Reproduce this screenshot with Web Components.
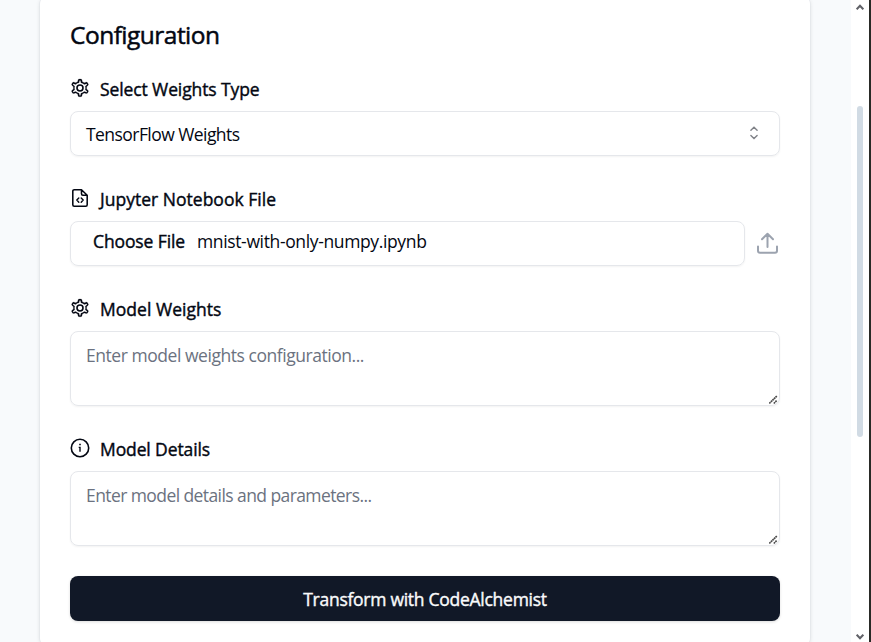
<!DOCTYPE html>
<html lang="en">
<head>
<meta charset="utf-8">
<title>Configuration</title>
<style>
html,body{margin:0;height:100%;overflow:hidden}
body{font-family:"Open Sans","Noto Sans",sans-serif;font-size:17.5px;line-height:25px;color:#030712;background:#f8fafc}
</style>
</head>
<body>
<app-shell>
  <config-card>
    <fit-text slot="title" width="149.5">Configuration</fit-text>
    <form-field>
      <ui-icon slot="icon" name="gear"></ui-icon><fit-text slot="label" width="159.5">Select Weights Type</fit-text>
      <select-box><fit-text width="153.5">TensorFlow Weights</fit-text></select-box>
    </form-field>
    <form-field>
      <ui-icon slot="icon" name="code"></ui-icon><fit-text slot="label" width="176">Jupyter Notebook File</fit-text>
      <file-box><fit-text slot="button" width="92">Choose File</fit-text><fit-text width="229.5">mnist-with-only-numpy.ipynb</fit-text></file-box>
    </form-field>
    <form-field>
      <ui-icon slot="icon" name="gear"></ui-icon><fit-text slot="label" width="121.5">Model Weights</fit-text>
      <text-box><fit-text width="278">Enter model weights configuration...</fit-text></text-box>
    </form-field>
    <form-field>
      <ui-icon slot="icon" name="info"></ui-icon><fit-text slot="label" width="110">Model Details</fit-text>
      <text-box><fit-text width="285.5">Enter model details and parameters...</fit-text></text-box>
    </form-field>
    <action-button><fit-text width="243.5">Transform with CodeAlchemist</fit-text></action-button>
  </config-card>
  <scroll-rail slot="rail"></scroll-rail>
</app-shell>
<script>
const define = (name, html, init) => customElements.define(name, class extends HTMLElement {
  constructor() {
    super();
    this.attachShadow({ mode: 'open' }).innerHTML = html;
  }
  connectedCallback() { if (init) init(this, this.shadowRoot); }
});

define('app-shell', `<style>
:host{display:flex;height:642px;width:871px;overflow:hidden}
main{flex:1;display:flex;justify-content:center;align-items:flex-start;box-sizing:border-box;padding:0 1px 0 0}
</style><main><slot></slot></main><slot name="rail"></slot>`);

define('config-card', `<style>
:host{display:flex;flex-direction:column;box-sizing:border-box;width:770px;height:654px;margin-top:-6px;padding:23px 30px 30px;background:#fff;border-radius:10px;box-shadow:0 0 0 .5px #e2e5ea,0 1px 4px rgba(0,0,0,.13)}
h2{margin:0 0 25px;font-size:24.5px;line-height:35px;font-weight:400;-webkit-text-stroke:.5px}
section{display:flex;flex-direction:column;gap:31px}
</style><h2><slot name="title"></slot></h2><section><slot></slot></section>`);

define('form-field', `<style>
:host{display:flex;flex-direction:column;gap:10px}
label{display:flex;align-items:center;gap:10px;height:24px}
::slotted(ui-icon){margin-top:-2px}
::slotted(fit-text){margin-top:1px;-webkit-text-stroke:.4px}
</style><label><slot name="icon"></slot><slot name="label"></slot></label><slot></slot>`);

define('select-box', `<style>
:host{display:flex;align-items:center;justify-content:space-between;box-sizing:border-box;height:45px;padding:0 15px 1px;border:1px solid #e5e7eb;border-radius:8px;box-shadow:0 1px 2px rgba(0,0,0,.05)}
::slotted(fit-text){margin-top:2px}
ui-icon{opacity:.5}
</style><slot></slot><ui-icon name="sort"></ui-icon>`);

define('file-box', `<style>
:host{display:flex;align-items:center;height:45px;gap:11px}
div{flex:1;display:flex;align-items:center;gap:12px;box-sizing:border-box;height:45px;padding:0 22px 5px;border:1px solid #e5e7eb;border-radius:8px;box-shadow:0 1px 2px rgba(0,0,0,.05)}
b{font-weight:400;-webkit-text-stroke:.4px}
ui-icon{color:#9ca3af;width:23px;height:25px;margin-right:1px}
</style><div><b><slot name="button"></slot></b><slot></slot></div><ui-icon name="upload"></ui-icon>`);

define('text-box', `<style>
:host{display:flex;justify-content:space-between;box-sizing:border-box;height:75px;padding:11px 0 0 15px;border:1px solid #e5e7eb;border-radius:8px;color:#6b7280;box-shadow:0 1px 2px rgba(0,0,0,.05)}
svg{align-self:flex-end;display:block}
</style><slot></slot><svg width="10" height="11" viewBox="0 0 10 11" fill="none" stroke="#4b4b4b" stroke-width="1.7" stroke-dasharray="1.8 .4"><path d="M.3 9.5 7.8 2M4.8 9.5l3-3"/></svg>`);

define('action-button', `<style>
:host{display:flex;align-items:center;justify-content:center;box-sizing:border-box;height:45px;padding-top:2px;margin-top:-1px;background:#111827;color:#f9fafb;border-radius:8px;-webkit-text-stroke:.4px;box-shadow:0 1px 3px rgba(0,0,0,.14)}
</style><slot></slot>`);

define('scroll-rail', `<style>
:host{display:flex;flex-direction:column;align-items:center;box-sizing:border-box;width:20px;height:642px;background:#fff;border-right:2px solid #292a26;padding:4px 0 2px}
i{display:block;width:6px;height:331px;margin:95px 0 auto;border-radius:3px;background:#d1dbe4}
svg{display:block}
</style><svg width="8" height="7" viewBox="0 0 8 7" fill="none" stroke="#606167" stroke-width="2"><path d="m.7 5.3 3.3-3.6 3.3 3.6"/></svg><i></i><svg width="8" height="7" viewBox="0 0 8 7" fill="none" stroke="#606167" stroke-width="2"><path d="M.7 1.7 4 5.3l3.3-3.6"/></svg>`);

/* Text whose tracking is set so that it spans a given advance width. */
define('fit-text', `<style>:host{display:inline-block;white-space:nowrap}</style><slot></slot>`, el => {
  const n = el.textContent.length;
  el.style.letterSpacing = '0px';
  const w = el.getBoundingClientRect().width;
  if (n && w) el.style.letterSpacing = ((+el.getAttribute('width') - w) / n).toFixed(3) + 'px';
});

const gear = '<path fill="currentColor" stroke="currentColor" stroke-width=".12" fill-rule="evenodd" d="M7.07.65a.83.83 0 0 0-.82.66l-.24 1.16c-.42.16-.81.39-1.17.66l-1.12-.37a.83.83 0 0 0-.99.38l-.43.75a.83.83 0 0 0 .17 1.04l.88.79a5 5 0 0 0 0 1.56l-.88.79a.83.83 0 0 0-.17 1.04l.43.75c.2.34.61.5.99.38l1.12-.37c.36.27.75.5 1.17.66l.24 1.16c.08.38.42.66.82.66h.86c.4 0 .74-.28.82-.66l.24-1.16c.42-.16.81-.39 1.17-.66l1.12.37c.38.12.79-.04.99-.38l.43-.75a.83.83 0 0 0-.17-1.04l-.88-.79a5 5 0 0 0 0-1.56l.88-.79a.83.83 0 0 0 .17-1.04l-.43-.75a.83.83 0 0 0-.99-.38l-1.12.37a5 5 0 0 0-1.17-.66l-.24-1.16a.83.83 0 0 0-.82-.66Zm-.17 2.53.28-1.57h.64l.28 1.57c.87.19 1.49.54 2.08 1.13l1.54-.52.31.55-1.22 1.07c.27.86.27 1.52 0 2.38l1.22 1.07-.31.55-1.54-.52A4.1 4.1 0 0 1 8.1 10.02l-.28 1.57h-.64l-.28-1.57A4.1 4.1 0 0 1 4.82 8.89l-1.54.52-.31-.55 1.22-1.07a3.8 3.8 0 0 1 0-2.38L2.97 4.34l.31-.55 1.54.52A4.1 4.1 0 0 1 6.9 3.18Z" transform="translate(0 .9)"/><circle cx="7.5" cy="7.5" r="1.9" fill="none" stroke="currentColor" stroke-width="1"/>';
const icons = {
  gear: [15, `<g transform="translate(7.5 7.5) scale(1.19 1.14) translate(-7.5 -7.5)">${gear}</g>`],
  code: [20, '<g fill="none" stroke="currentColor" stroke-width="1.55" stroke-linejoin="round" stroke-linecap="round"><path d="M11.5 1.7H4.2a1.4 1.4 0 0 0-1.4 1.4v13.7a1.4 1.4 0 0 0 1.4 1.4h11.6a1.4 1.4 0 0 0 1.4-1.4V7.2Zm0 0v4.1c0 .8.6 1.4 1.4 1.4h4.3"/><path stroke-width="1.4" d="m8.8 10-2 2.1 2 2.1m2.4-4.2 2 2.1-2 2.1"/></g>'],
  info: [20, '<circle cx="10" cy="10" r="8.7" fill="none" stroke="currentColor" stroke-width="1.6"/><path d="M9.2 5.7h1.6v1.6H9.2zM8.7 8.8h2v5H9.3V10h-.6z" fill="currentColor"/>'],
  sort: [20, '<path fill="none" stroke="currentColor" stroke-width="1.4" stroke-linecap="round" d="m6.9 7.3 3.1-3 3.1 3m-6.2 5.2 3.1 3 3.1-3"/>'],
  upload: [23, '<path fill="none" stroke="currentColor" stroke-width="2" stroke-linecap="round" stroke-linejoin="round" d="M11.5 15V1.8M6 7.2l5.5-5.5L17 7.2M2 14.6v4.1c0 1.3.7 2 2 2h15c1.3 0 2-.7 2-2v-4.1"/>']
};
define('ui-icon', `<style>:host{display:block;width:20px;height:20px}svg{display:block;width:100%;height:100%}</style><svg></svg>`, (el, root) => {
  const [size, art] = icons[el.getAttribute('name')];
  const svg = root.querySelector('svg');
  svg.setAttribute('viewBox', `0 0 ${size} ${size}`);
  svg.innerHTML = art;
});
</script>
</body>
</html>
